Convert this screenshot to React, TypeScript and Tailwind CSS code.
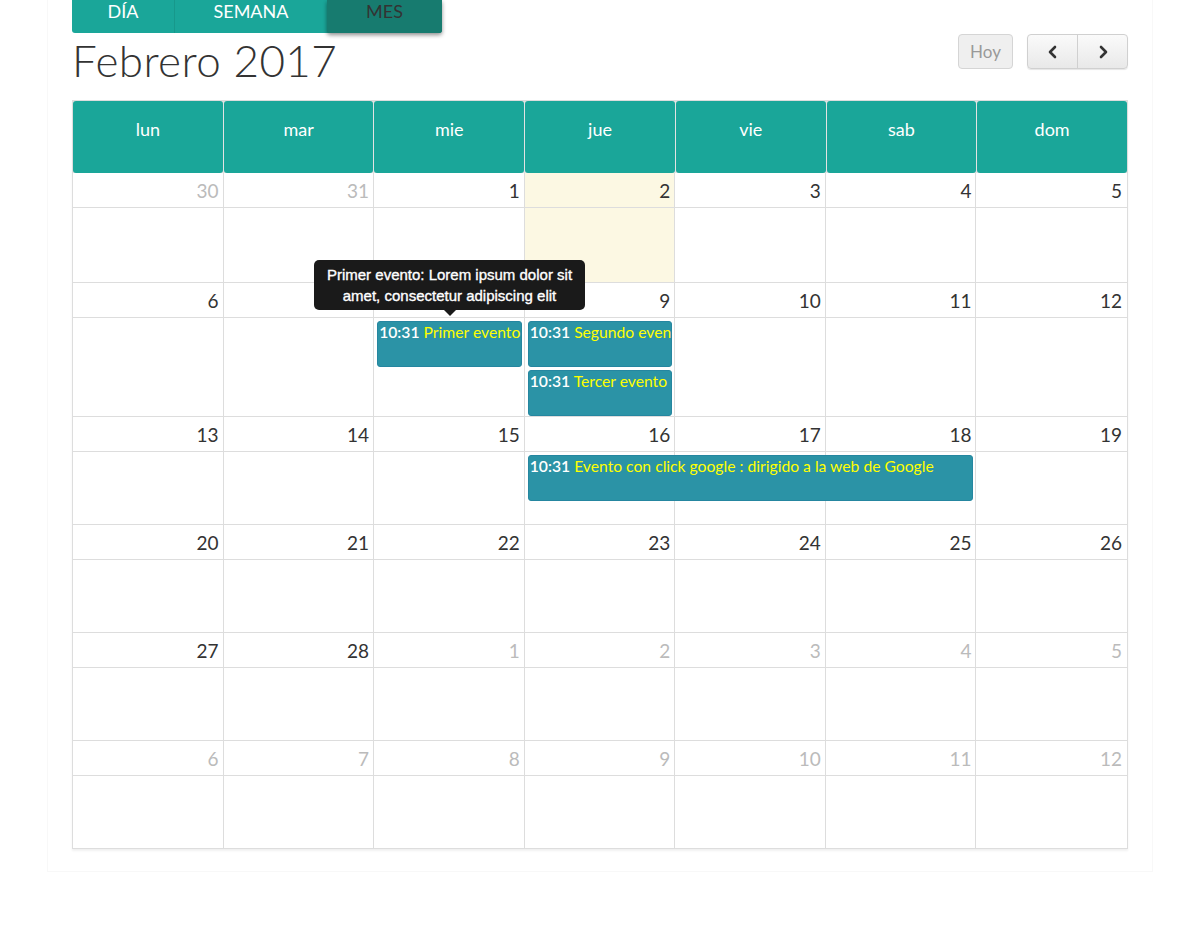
import React from "react";

type Ev = { col: number; span: number; title: string };
type Week = { days: { n: number; muted?: boolean; today?: boolean }[]; events: Ev[][]; h: string };

const dayNames = ["lun", "mar", "mie", "jue", "vie", "sab", "dom"];

const mk = (start: number[], muted: boolean[]) => start.map((n, i) => ({ n, muted: muted[i] }));

const weeks: Week[] = [
  {
    days: [
      { n: 30, muted: true },
      { n: 31, muted: true },
      { n: 1 },
      { n: 2, today: true },
      { n: 3 },
      { n: 4 },
      { n: 5 },
    ],
    events: [],
    h: "min-h-[110px]",
  },
  {
    days: mk([6, 7, 8, 9, 10, 11, 12], [false, false, false, false, false, false, false]),
    events: [
      [
        { col: 3, span: 1, title: "Primer evento: Lorem ipsum dolor sit amet" },
        { col: 4, span: 1, title: "Segundo evento" },
      ],
      [{ col: 4, span: 1, title: "Tercer evento" }],
    ],
    h: "min-h-[134px]",
  },
  {
    days: mk([13, 14, 15, 16, 17, 18, 19], [false, false, false, false, false, false, false]),
    events: [[{ col: 4, span: 3, title: "Evento con click google : dirigido a la web de Google" }]],
    h: "min-h-[108px]",
  },
  {
    days: mk([20, 21, 22, 23, 24, 25, 26], [false, false, false, false, false, false, false]),
    events: [],
    h: "min-h-[108px]",
  },
  {
    days: mk([27, 28, 1, 2, 3, 4, 5], [false, false, true, true, true, true, true]),
    events: [],
    h: "min-h-[108px]",
  },
  {
    days: mk([6, 7, 8, 9, 10, 11, 12], [true, true, true, true, true, true, true]),
    events: [],
    h: "min-h-[108px]",
  },
];

const colStart = ["", "col-start-1", "col-start-2", "col-start-3", "col-start-4", "col-start-5", "col-start-6", "col-start-7"];
const colSpan = ["", "col-span-1", "col-span-2", "col-span-3"];
const rowStart = ["", "row-start-1", "row-start-2", "row-start-3"];

const EventBar = ({ ev, row }: { ev: Ev; row: number }) => (
  <div
    className={`${colStart[ev.col]} ${colSpan[ev.span]} ${rowStart[row]} relative z-10 mx-[3px] mt-[3px] h-[46px] overflow-hidden whitespace-nowrap rounded-[3px] border border-[#2586a0] bg-[#2b93a6] px-[1px] text-[15.7px] leading-[20px]`}
  >
    <span className="font-semibold text-white">10:31</span>{" "}
    <span className="text-[#ffff00]">{ev.title}</span>
  </div>
);

const WeekRow = ({ week }: { week: Week }) => (
  <div className={`grid grid-cols-7 grid-rows-[35px_auto_auto_1fr] border-b border-[#dddddd] ${week.h}`}>
    {week.days.map((d, i) => (
      <div
        key={"bg" + i}
        className={`${colStart[i + 1]} row-[1/-1] ${i < 6 ? "border-r border-[#dddddd]" : ""} ${d.today ? "bg-[#fcf8e3]" : ""}`}
      />
    ))}
    {week.days.map((d, i) => (
      <div
        key={"n" + i}
        className={`${colStart[i + 1]} row-start-1 z-10 border-b border-[#dddddd] pr-[5px] pt-[5px] text-right text-[19px] leading-[26px] ${d.muted ? "text-[#bbbbbb]" : "text-[#333333]"}`}
      >
        {d.n}
      </div>
    ))}
    {week.events.map((row, r) => row.map((ev, k) => <EventBar key={r + "-" + k} ev={ev} row={r + 2} />))}
  </div>
);

export default function App() {
  return (
    <div className="min-h-[938px] bg-white font-['Lato','Open_Sans',sans-serif]">
      <div className="mx-[48px] px-[24px] pb-[22px] shadow-[0_0_0_1px_#f8f8f8]">
        <div className="flex h-[33px]">
          <div className="flex h-full rounded-b-[3px] bg-[#1aa699] text-[18px] leading-[22px]">
            <button className="w-[103px] border-r border-[#17988b] pb-[13px] uppercase text-white">Día</button>
            <button className="w-[152px] pb-[13px] uppercase text-white">Semana</button>
            <button className="w-[115px] rounded-b-[3px] bg-[#177b6f] pb-[13px] uppercase text-[#333333] shadow-[0_2px_4px_rgba(0,0,0,0.45)]">Mes</button>
          </div>
        </div>

        <div className="flex h-[67px] items-start justify-between">
          <h1 className="mt-[2px] text-[44px] font-light leading-[50px] tracking-[0.4px] text-[#333333]">Febrero 2017</h1>
          <div className="mt-[1px] flex gap-[14px]">
            <button className="h-[35px] w-[55px] rounded-[4px] border border-[#d5d5d5] bg-[#efefef] text-[17px] text-[#999999]">Hoy</button>
            <div className="flex h-[35px] w-[101px] overflow-hidden rounded-[4px] border border-[#d0d0d0] bg-gradient-to-b from-[#fafafa] to-[#e9e9e9] shadow-[0_1px_1px_rgba(0,0,0,0.1)]">
              <button className="flex flex-1 items-center justify-center border-r border-[#d0d0d0]">
                <svg width="12" height="14" viewBox="0 0 12 14" fill="none" stroke="#333" strokeWidth="2.6" strokeLinecap="round" strokeLinejoin="round">
                  <path d="M8 2 L3 7 L8 12" />
                </svg>
              </button>
              <button className="flex flex-1 items-center justify-center">
                <svg width="12" height="14" viewBox="0 0 12 14" fill="none" stroke="#333" strokeWidth="2.6" strokeLinecap="round" strokeLinejoin="round">
                  <path d="M4 2 L9 7 L4 12" />
                </svg>
              </button>
            </div>
          </div>
        </div>

        <div className="border-x border-t border-[#dddddd] shadow-[0_2px_2px_rgba(0,0,0,0.06)]">
          <div className="grid h-[72px] grid-cols-7 gap-[1px] bg-[#e3e3e3]">
            {dayNames.map((d) => (
              <div key={d} className="flex items-center justify-center rounded-[3px] bg-[#1aa699] pb-[15px] text-[18px] text-white">
                {d}
              </div>
            ))}
          </div>
          <div className="relative">
            {weeks.map((w, i) => (
              <WeekRow key={i} week={w} />
            ))}
            <div className="absolute left-[241px] top-[87px] z-20">
              <div className="w-[271px] rounded-[5px] bg-[#1a1a1a] px-[8px] py-[4px] text-center font-['Liberation_Sans',Arial,sans-serif] text-[15px] leading-[21px] text-white [-webkit-text-stroke:0.35px_white]">
                Primer evento: Lorem ipsum dolor sit amet, consectetur adipiscing elit
              </div>
              <div className="ml-[130px] h-0 w-0 border-x-[6px] border-t-[6px] border-x-transparent border-t-[#1a1a1a]" />
            </div>
          </div>
        </div>
      </div>
    </div>
  );
}
